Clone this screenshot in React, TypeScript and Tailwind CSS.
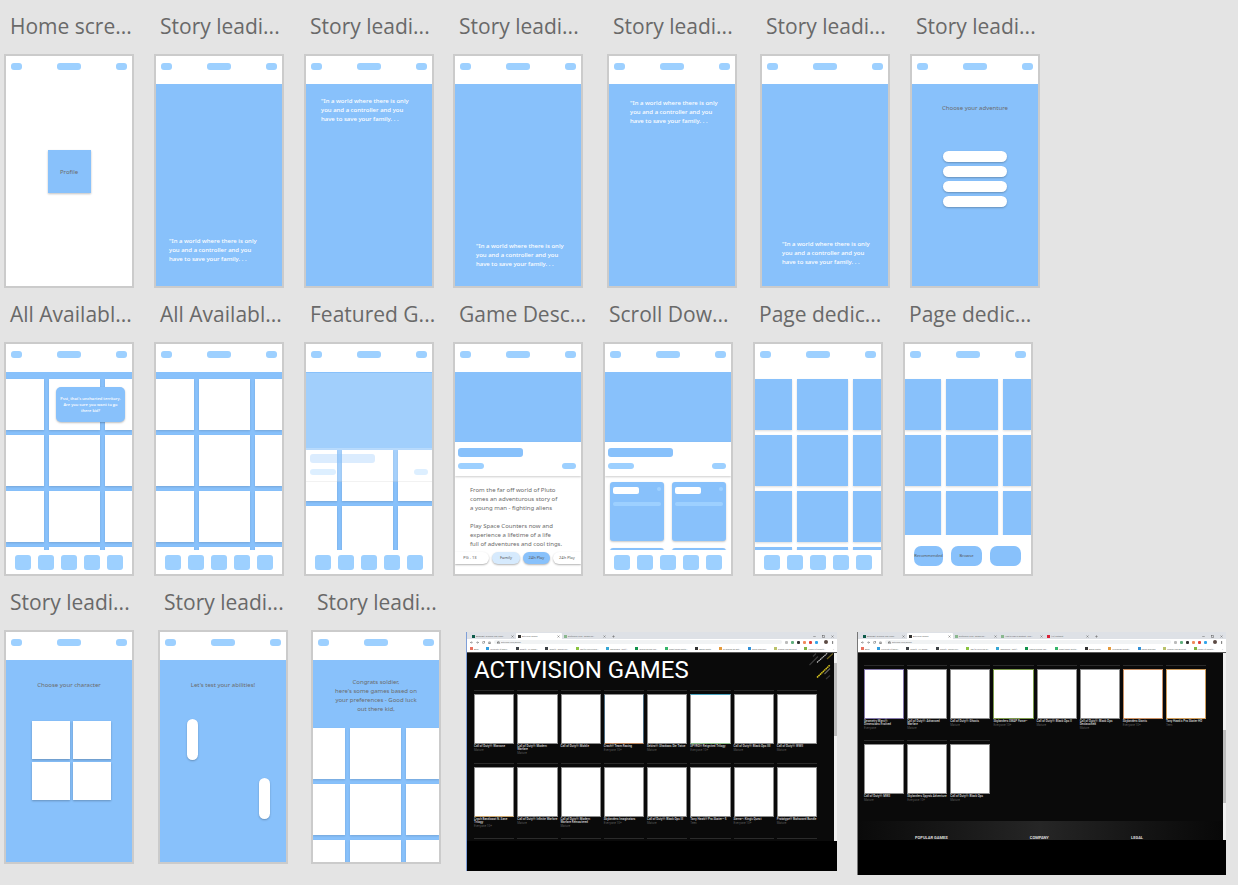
import type { ReactNode } from "react";
import { ArrowLeft, ArrowRight, House, Lock, Minus, MoreVertical, Plus, RotateCw, Square, X } from "lucide-react";

type TileTone = "white" | "blue";

function Artboard({ title, gap = "ml-5", children }: { title: string; gap?: string; children?: ReactNode }) {
  return (
    <section className={`${gap} flex w-[130px] shrink-0 flex-col`}>
      <h2 className="flex h-[54px] items-center pb-0.5 pl-1.5 font-['Open_Sans',sans-serif] text-[21px] leading-7 font-normal whitespace-nowrap text-[#696969]">
        {title}
      </h2>
      <div className="flex h-[234px] flex-col overflow-hidden border-2 border-[#cbcbcb] bg-white">
        <header className="flex h-7 shrink-0 justify-between px-[5px] pt-[7px]">
          <button aria-label="Menu" className="h-[7px] w-[11px] rounded-[3px] bg-[#9dd0ff]" />
          <button aria-label="Title" className="h-[7px] w-6 rounded-[3px] bg-[#9dd0ff]" />
          <button aria-label="Account" className="h-[7px] w-[11px] rounded-[3px] bg-[#9dd0ff]" />
        </header>
        {children}
      </div>
    </section>
  );
}

function Story({ pad }: { pad: string }) {
  return (
    <div className={`flex-1 bg-[#88c1fb] text-[6px] leading-[9px] font-medium text-white ${pad}`}>
      <p className="w-[100px]">
        "In a world where there is only
        <br />
        you and a controller and you
        <br />
        have to save your family. . .
      </p>
    </div>
  );
}

function BottomNav() {
  return (
    <nav className="flex h-6 shrink-0 gap-[7px] bg-white pt-[5px] pl-[9px]">
      {["Home", "Search", "Games", "Saved", "Settings"].map((name) => (
        <button key={name} aria-label={name} className="h-[15px] w-4 rounded-[3px] bg-[#9dd0ff]" />
      ))}
    </nav>
  );
}

function Tiles({ cols, count, tone }: { cols: string; count: number; tone: TileTone }) {
  return (
    <div className={`grid auto-rows-[51px] gap-[5px] ${cols}`}>
      {Array.from({ length: count }, (_, i) => (
        <div
          key={i}
          className={
            tone === "white"
              ? "bg-white shadow-[0_1px_2px_rgba(0,0,0,0.14)]"
              : "bg-[#88c1fb] shadow-[0_1px_2px_rgba(0,0,0,0.14)]"
          }
        />
      ))}
    </div>
  );
}

function GameHeader() {
  return (
    <>
      <div className="h-[70px] shrink-0 bg-[#88c1fb]" />
      <div className="relative h-[34px] shrink-0 bg-white pt-1.5 pr-[5px] pl-[3px] shadow-[0_1px_2px_rgba(0,0,0,0.2)]">
        <div className="h-[9px] w-[65px] rounded-[3px] bg-[#88c1fb]" />
        <div className="flex justify-between pt-1.5">
          <div className="h-1.5 w-[26px] rounded-[3px] bg-[#9dd0ff]" />
          <div className="h-1.5 w-3.5 rounded-[3px] bg-[#9dd0ff]" />
        </div>
      </div>
    </>
  );
}

function InfoCard() {
  return (
    <article className="h-[59px] rounded-[3px] bg-[#88c1fb] px-[3px] pt-[5px] shadow-[0_1px_2px_rgba(0,0,0,0.22)]">
      <div className="flex justify-between">
        <div className="h-[7px] w-[26px] rounded-[2px] bg-white" />
        <div className="h-1 w-1 rounded-full bg-[#9dd0ff]" />
      </div>
      <div className="mt-2 h-1 rounded-full bg-[#9dd0ff]" />
    </article>
  );
}

const BOOKMARKS: [string, string][] = [
  ["Apps", "bg-[#e8705f]"],
  ["University of Mass…", "bg-[#2f9de0]"],
  ["Shopify - UX Resea…", "bg-[#3d4246]"],
  ["Shopify - Design Inn…", "bg-[#3d4246]"],
  ["Tap for recycling by…", "bg-[#8ac43f]"],
  ["Dashboard - Netlif…", "bg-[#35a7d6]"],
  ["Tanya's Design Tas…", "bg-[#13934c]"],
  ["Smart home doctor…", "bg-[#35b56a]"],
  ["Adobe Digital", "bg-[#333333]"],
  ["To analyze 30 Opti…", "bg-[#e59a3c]"],
  ["Saved Searches", "bg-[#3290d8]"],
  ["alibaba.com Account", "bg-[#b9c26a]"],
  ["People of Shopify…", "bg-[#7fb241]"],
];

const EXTENSIONS = [
  "bg-[#bbbbbb]",
  "bg-[#5fae7c]",
  "bg-[#333333]",
  "bg-[#f08a5a]",
  "bg-[#e0413a]",
  "bg-[#33a4ea]",
];

function BrowserBar({ extraTabs = [] }: { extraTabs?: [string, string][] }) {
  const tabs: [string, string][] = [
    ["BorderBit - Discover The Jungl…", "bg-[#0d5a4a]"],
    ["Activision Games", "bg-[#333333]"],
    ["proficiency in xd - Google Se…", "bg-[#8ab88f]"],
    ...extraTabs,
  ];
  return (
    <div className="text-[2px] leading-[6px] text-[#666666]">
      <div className="flex h-[7px] items-end bg-[#dee1e6] pl-[3px]">
        {tabs.map(([name, color], i) => (
          <button
            key={name}
            className={`flex h-1.5 w-[46px] shrink-0 items-center gap-px px-0.5 ${
              i === 1 ? "rounded-t-[1px] bg-white" : ""
            }`}
          >
            <span className={`h-[3px] w-[3px] shrink-0 ${color}`} />
            <span className="flex-1 text-left whitespace-nowrap">{name}</span>
            <X className="h-[3px] w-[3px] shrink-0" strokeWidth={4} />
          </button>
        ))}
        <button aria-label="New tab" className="flex h-1.5 items-center pl-1">
          <Plus className="h-[3px] w-[3px]" strokeWidth={4} />
        </button>
        <div className="ml-auto flex h-1.5 items-center gap-1.5 pr-[3px]">
          <Minus className="h-[3px] w-[3px]" strokeWidth={4} />
          <Square className="h-[3px] w-[3px]" strokeWidth={5} />
          <X className="h-[3px] w-[3px]" strokeWidth={4} />
        </div>
      </div>
      <div className="flex h-1.5 items-center gap-[3px] bg-white pr-[3px] pl-[3px]">
        <ArrowLeft className="h-[3px] w-[3px]" strokeWidth={4} />
        <ArrowRight className="h-[3px] w-[3px]" strokeWidth={4} />
        <RotateCw className="h-[3px] w-[3px]" strokeWidth={4} />
        <House className="h-[3px] w-[3px]" strokeWidth={4} />
        <div className="flex h-1 flex-1 items-center gap-px rounded-full bg-[#f1f3f4] pl-[3px]">
          <Lock className="h-[3px] w-[3px]" strokeWidth={4} />
          <input
            aria-label="Address"
            readOnly
            defaultValue="activision.com/games"
            className="h-1.5 w-full min-w-0 bg-transparent text-[2px] leading-[6px] outline-none"
          />
        </div>
        {EXTENSIONS.map((color) => (
          <span key={color} className={`h-[3px] w-[3px] rounded-[1px] ${color}`} />
        ))}
        <span className="ml-[3px] h-1 w-1 rounded-full bg-[#5b4a44]" />
        <MoreVertical className="h-[3px] w-[3px]" strokeWidth={5} />
      </div>
      <div className="flex h-[7px] items-center justify-between bg-white pr-[3px] pl-[3px]">
        {BOOKMARKS.map(([name, color]) => (
          <a key={name} href="#" className="flex items-center gap-px whitespace-nowrap">
            <span className={`h-[3px] w-[3px] shrink-0 ${color}`} />
            <span>{name}</span>
          </a>
        ))}
        <span>»</span>
      </div>
      <div className="h-px bg-[#5a5a5a]" />
    </div>
  );
}

type Game = [string, string];

const TOP_GAMES: Game[] = [
  ["Call of Duty®: Warzone", "Mature"],
  ["Call of Duty®: Modern Warfare", "Mature"],
  ["Call of Duty®: Mobile", ""],
  ["Crash® Team Racing", "Everyone 10+"],
  ["Sekiro®: Shadows Die Twice", "Mature"],
  ["SPYRO® Reignited Trilogy", "Everyone 10+"],
  ["Call of Duty®: Black Ops IIII", "Mature"],
  ["Call of Duty®: WWII", "Mature"],
  ["Crash Bandicoot N. Sane Trilogy", "Everyone 10+"],
  ["Call of Duty®: Infinite Warfare", "Mature"],
  ["Call of Duty®: Modern Warfare Remastered", "Mature"],
  ["Skylanders Imaginators", "Everyone 10+"],
  ["Call of Duty®: Black Ops III", "Mature"],
  ["Tony Hawk® Pro Skater™ 5", "Teen"],
  ["Sierra™: King's Quest", "Everyone 10+"],
  ["Prototype® Biohazard Bundle", "Mature"],
];

const MORE_GAMES: Game[] = [
  ["Geometry Wars®: Dimensions Evolved", "Everyone"],
  ["Call of Duty®: Advanced Warfare", "Mature"],
  ["Call of Duty®: Ghosts", "Mature"],
  ["Skylanders SWAP Force™", "Everyone 10+"],
  ["Call of Duty®: Black Ops II", "Mature"],
  ["Call of Duty®: Black Ops Declassified", "Mature"],
  ["Skylanders Giants", "Everyone 10+"],
  ["Tony Hawk's Pro Skater HD", "Teen"],
  ["Call of Duty®: MW3", "Mature"],
  ["Skylanders Spyro's Adventure", "Everyone 10+"],
  ["Call of Duty®: Black Ops", "Mature"],
];

const EDGES: Record<string, string> = {
  "Crash® Team Racing": "border-x-[#4c6b80] border-t-[#8c8c8c] border-b-[#b9835c]",
  "SPYRO® Reignited Trilogy": "border-x-[#8c8c8c] border-t-[#4aa3bf] border-b-[#8fbf8a]",
  "Crash Bandicoot N. Sane Trilogy": "border-x-[#8c8c8c] border-t-[#8c8c8c] border-b-[#c9a56d]",
  "Geometry Wars®: Dimensions Evolved": "border-[#8377a8]",
  "Skylanders SWAP Force™": "border-[#7d9a4c]",
  "Skylanders Giants": "border-[#c98f63]",
  "Tony Hawk's Pro Skater HD": "border-[#cf9c5a]",
};

function GameGrid({ games, rows }: { games: Game[]; rows: string }) {
  return (
    <ul className={`grid grid-cols-8 gap-x-[3px] ${rows}`}>
      {games.map(([name, rating]) => (
        <li key={name} className="min-w-0 border-t border-[#2b2b2b] pt-[3px]">
          <div className={`h-[50px] border bg-white ${EDGES[name] ?? "border-[#8c8c8c]"}`} />
          <p className="pt-px text-[3px] leading-[3px] font-medium text-[#d8d8d8]">{name}</p>
          <p className="pt-px text-[3px] leading-[3px] text-[#5c5c5c]">{rating}</p>
        </li>
      ))}
    </ul>
  );
}

function Scrollbar({ top }: { top: string }) {
  return (
    <div className={`w-[3px] shrink-0 bg-[#f1f1f1] ${top}`}>
      <div className="h-[73px] bg-[#bdbdbd]" />
    </div>
  );
}

function Streaks() {
  return (
    <svg
      viewBox="0 0 24 28"
      className="absolute top-0 right-1 h-7 w-6"
      fill="none"
      strokeWidth="1.1"
      aria-hidden="true"
    >
      <path d="M4 3.500 7 0.500M0.500 12 9 3.500" stroke="#3d3d3d" />
      <path d="M8 9.500 18.500 0" stroke="#c4c4c4" strokeDasharray="1.6 0.4" />
      <path d="M18 6 24 0.500" stroke="#6f621b" />
      <path d="M8 24.500 21 12" stroke="#d8c51e" strokeWidth="1.5" strokeDasharray="1.6 0.4" />
      <path d="M15.500 21 21 15.500" stroke="#666666" />
      <path d="M17 26 21 22.500" stroke="#383838" />
    </svg>
  );
}

export default function App() {
  return (
    <main className="min-h-screen overflow-x-auto bg-[#e4e4e4] pl-1 font-['Noto_Sans','Open_Sans',sans-serif]">
      <div className="flex">
        <Artboard title="Home scre..." gap="ml-0">
          <div className="flex flex-1 justify-center pt-[66px]">
            <button className="h-[43px] w-[43px] bg-[#88c1fb] pt-0.5 text-[6px] leading-[9px] text-[#6b6b6b] shadow-[0_1px_2px_rgba(0,0,0,0.25)]">
              Profile
            </button>
          </div>
        </Artboard>
        <Artboard title="Story leadi...">
          <Story pad="pt-[153px] pl-[13px]" />
        </Artboard>
        <Artboard title="Story leadi...">
          <Story pad="pt-[13px] pl-[15px]" />
        </Artboard>
        <Artboard title="Story leadi..." gap="ml-[19px]">
          <Story pad="pt-[158px] pl-[21px]" />
        </Artboard>
        <Artboard title="Story leadi..." gap="ml-6">
          <Story pad="pt-[15px] pl-[21px]" />
        </Artboard>
        <Artboard title="Story leadi..." gap="ml-[23px]">
          <Story pad="pt-[156px] pl-5" />
        </Artboard>
        <Artboard title="Story leadi...">
          <div className="flex flex-1 flex-col items-center bg-[#88c1fb] pt-5">
            <p className="text-[6px] leading-[9px] text-[#6b6b6b]">Choose your adventure</p>
            <div className="mt-[38px] flex flex-col gap-1">
              {["First", "Second", "Third", "Fourth"].map((name) => (
                <button
                  key={name}
                  aria-label={name}
                  className="h-[11px] w-16 rounded-full bg-white shadow-[0_1px_2px_rgba(0,0,0,0.25)]"
                />
              ))}
            </div>
          </div>
        </Artboard>
      </div>

      <div className="flex">
        <Artboard title="All Availabl..." gap="ml-0">
          <div className="relative flex-1 overflow-hidden bg-[#88c1fb] pt-[7px]">
            <Tiles cols="grid-cols-[38px_51px_27px]" count={12} tone="white" />
            <p
              role="tooltip"
              className="absolute top-[15px] left-[50px] flex h-[35px] w-[69px] items-center justify-center rounded-[5px] bg-[#88c1fb] text-center font-['Open_Sans',sans-serif] text-[4px] leading-[6px] font-semibold text-white shadow-[0_1px_2px_rgba(0,0,0,0.25)]"
            >
              Psst, that's uncharted territory.
              <br />
              Are you sure you want to go
              <br />
              there kid?
            </p>
          </div>
          <BottomNav />
        </Artboard>
        <Artboard title="All Availabl...">
          <div className="flex-1 overflow-hidden bg-[#88c1fb] pt-[7px]">
            <Tiles cols="grid-cols-[38px_51px_27px]" count={12} tone="white" />
          </div>
          <BottomNav />
        </Artboard>
        <Artboard title="Featured G...">
          <div className="relative flex-1 overflow-hidden bg-[#88c1fb]">
            <div className="h-[78px] border-t border-[#88c1fb] bg-[#a1cffc]" />
            <Tiles cols="grid-cols-[31px_51px_34px]" count={6} tone="white" />
            <div className="absolute inset-x-0 top-[76px] h-[34px] border-b border-black/5 bg-white/25 pt-1.5 pr-1 pl-1">
              <div className="h-[9px] w-[65px] rounded-[3px] bg-[#88c1fb]/30" />
              <div className="flex justify-between pt-1.5">
                <div className="h-1.5 w-[26px] rounded-[3px] bg-[#9dd0ff]/35" />
                <div className="h-1.5 w-3.5 rounded-[3px] bg-[#9dd0ff]/35" />
              </div>
            </div>
          </div>
          <BottomNav />
        </Artboard>
        <Artboard title="Game Desc..." gap="ml-[19px]">
          <GameHeader />
          <div className="h-[76px] shrink-0 pt-[10px] pl-[15px] text-[6px] leading-[9px] whitespace-nowrap text-[#6b6b6b]">
            <p>
              From the far off world of Pluto
              <br />
              comes an adventurous story of
              <br />
              a young man - fighting aliens
            </p>
            <p className="pt-[9px]">
              Play Space Counters now and
              <br />
              experience a lifetime of a life
              <br />
              full of adventures and cool tings.
            </p>
          </div>
          <div className="flex h-3 shrink-0 gap-[3px] text-[4px] leading-[6px] whitespace-nowrap text-[#555555]">
            <button className="w-[34px] shrink-0 rounded-r-full bg-white pr-1 shadow-[0_1px_2px_rgba(0,0,0,0.3)]">PG - 13</button>
            <button className="w-7 shrink-0 rounded-full bg-[#d6eafd] shadow-[0_1px_2px_rgba(0,0,0,0.3)]">Family</button>
            <button className="w-[27px] shrink-0 rounded-full bg-[#88c1fb] shadow-[0_1px_2px_rgba(0,0,0,0.3)]">24h Play</button>
            <button className="w-7 shrink-0 rounded-l-full bg-white shadow-[0_1px_2px_rgba(0,0,0,0.3)]">24h Play</button>
          </div>
        </Artboard>
        <Artboard title="Scroll Dow...">
          <GameHeader />
          <div className="grid flex-1 auto-rows-[59px] grid-cols-2 gap-x-2 gap-y-[7px] overflow-hidden px-[5px] pt-1.5">
            <InfoCard />
            <InfoCard />
            <InfoCard />
            <InfoCard />
          </div>
          <BottomNav />
        </Artboard>
        <Artboard title="Page dedic...">
          <div className="flex-1 overflow-hidden pt-[7px]">
            <Tiles cols="grid-cols-[37px_51px_28px]" count={12} tone="blue" />
          </div>
          <BottomNav />
        </Artboard>
        <Artboard title="Page dedic...">
          <div className="h-[163px] shrink-0 overflow-hidden pt-[7px]">
            <Tiles cols="grid-cols-[36px_52px_28px]" count={9} tone="blue" />
          </div>
          <div className="flex gap-2 pt-[11px] pl-[9px] text-[4px] leading-[6px] text-[#555555]">
            <button className="flex h-5 w-[29px] items-center justify-center rounded-[7px] bg-[#88c1fb]">Recommended</button>
            <button className="flex h-5 w-[31px] items-center justify-center rounded-[7px] bg-[#88c1fb]">Browse</button>
            <button aria-label="More" className="h-5 w-[31px] rounded-[7px] bg-[#88c1fb]" />
          </div>
        </Artboard>
      </div>

      <div className="flex">
        <Artboard title="Story leadi..." gap="ml-0">
          <div className="flex flex-1 flex-col items-center bg-[#88c1fb] pt-[21px]">
            <p className="text-[6px] leading-[9px] text-[#6b6b6b]">Choose your character</p>
            <div className="mt-[31px] ml-1 grid grid-cols-2 gap-[3px]">
              {["One", "Two", "Three", "Four"].map((name) => (
                <button
                  key={name}
                  aria-label={name}
                  className="h-[38px] w-[38px] bg-white shadow-[0_1px_2px_rgba(0,0,0,0.25)]"
                />
              ))}
            </div>
          </div>
        </Artboard>
        <Artboard title="Story leadi..." gap="ml-6">
          <div className="flex-1 bg-[#88c1fb] pt-[21px]">
            <p className="text-center text-[6px] leading-[9px] text-[#6b6b6b]">Let's test your abilities!</p>
            <div className="mt-[29px] flex justify-between pr-4 pl-[27px]">
              <div className="h-[41px] w-[11px] rounded-full bg-white shadow-[0_1px_2px_rgba(0,0,0,0.25)]" />
              <div className="mt-[59px] h-[41px] w-[11px] rounded-full bg-white shadow-[0_1px_2px_rgba(0,0,0,0.25)]" />
            </div>
          </div>
        </Artboard>
        <Artboard title="Story leadi..." gap="ml-[23px]">
          <div className="flex-1 overflow-hidden bg-[#88c1fb] pt-[18px]">
            <p className="mb-[14px] text-center text-[6px] leading-[9px] text-[#6b6b6b]">
              Congrats soldier,
              <br />
              here's some games based on
              <br />
              your preferences - Good luck
              <br />
              out there kid,
            </p>
            <Tiles cols="grid-cols-[32px_51px_33px]" count={9} tone="white" />
          </div>
        </Artboard>

        <section className="mt-14 ml-[25px] flex h-[239px] w-[371px] shrink-0 flex-col border-l border-[#7f9fd8] bg-black font-['Roboto',sans-serif]">
          <BrowserBar />
          <div className="relative flex h-[188px] overflow-hidden bg-[#0a0a0a]">
            <div className="flex-1 pr-[17px] pl-[7px]">
              <h1 className="flex h-[37px] items-center pb-1 text-[24px] leading-7 font-normal whitespace-nowrap text-white">
                ACTIVISION GAMES
              </h1>
              <GameGrid games={TOP_GAMES} rows="auto-rows-[73px]" />
              <div className="grid grid-cols-8 gap-x-[3px] pt-0.5">
                {TOP_GAMES.slice(0, 8).map(([name]) => (
                  <div key={name} className="h-px bg-[#2b2b2b]" />
                ))}
              </div>
            </div>
            <Streaks />
            <Scrollbar top="pt-2.5" />
          </div>
        </section>

        <section className="mt-14 ml-5 flex h-[243px] w-[369px] shrink-0 flex-col border-l border-[#777777] bg-black font-['Roboto',sans-serif]">
          <BrowserBar
            extraTabs={[
              ["How to copy in abstract - Goo…", "bg-[#8ab88f]"],
              ["(12) Pinterest", "bg-[#d92238]"],
            ]}
          />
          <div className="flex h-[187px] overflow-hidden bg-[#0a0a0a]">
            <div className="flex flex-1 flex-col">
              <div className="h-[156px] pt-3 pr-[17px] pl-1.5">
                <GameGrid games={MORE_GAMES} rows="auto-rows-[75px]" />
              </div>
              <div className="mt-3 flex flex-1 items-end justify-between bg-linear-to-r from-[#0a0a0a] via-[#262626] to-[#080808] pr-[80px] pl-[57px] text-[4px] leading-[4px] font-bold text-[#dddddd]">
                <p>POPULAR GAMES</p>
                <p>COMPANY</p>
                <p>LEGAL</p>
              </div>
            </div>
            <Scrollbar top="pt-[77px]" />
          </div>
        </section>
      </div>
    </main>
  );
}
